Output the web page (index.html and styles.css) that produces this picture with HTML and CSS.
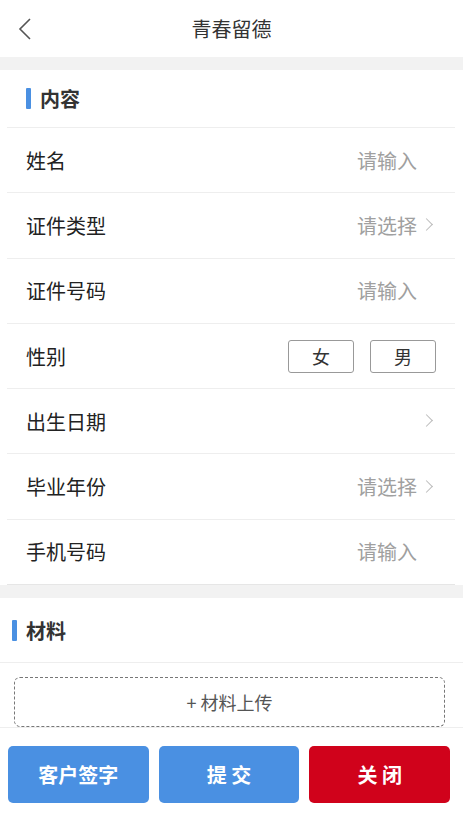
FILE: index.html
```html
<!DOCTYPE html>
<html>
<head>
    <meta charset="utf-8">
    <title>青春留德</title>
    <link rel="stylesheet" href="styles.css">
</head>
<body>
    <div class="header">
        <span class="back">
            <svg width="14" height="22" viewBox="0 0 14 22"><path d="M12 1 L2 11 L12 21" fill="none" stroke="#555" stroke-width="1.6"/></svg>
        </span>
        <h1>青春留德</h1>
    </div>

    <div class="section section-info">
        <div class="section-title">内容</div>
        <div class="row">
            <span class="label">姓名</span>
            <span class="value">请输入</span>
        </div>
        <div class="row">
            <span class="label">证件类型</span>
            <span class="value">请选择<i class="arrow"></i></span>
        </div>
        <div class="row">
            <span class="label">证件号码</span>
            <span class="value">请输入</span>
        </div>
        <div class="row">
            <span class="label">性别</span>
            <span class="gender">
                <span class="gender-btn">女</span>
                <span class="gender-btn">男</span>
            </span>
        </div>
        <div class="row">
            <span class="label">出生日期</span>
            <span class="value"><i class="arrow"></i></span>
        </div>
        <div class="row">
            <span class="label">毕业年份</span>
            <span class="value">请选择<i class="arrow"></i></span>
        </div>
        <div class="row">
            <span class="label">手机号码</span>
            <span class="value">请输入</span>
        </div>
    </div>

    <div class="section section-files">
        <div class="section-title">材料</div>
        <div class="upload-wrap">
            <div class="upload">+ 材料上传</div>
        </div>
    </div>

    <div class="footer">
        <button class="btn btn-blue">客户签字</button>
        <button class="btn btn-blue">提 交</button>
        <button class="btn btn-red">关 闭</button>
    </div>
</body>
</html>
```

FILE: styles.css
```css
body {
    margin: 0;
    background-color: #f2f2f2;
    font-family: "Noto Sans CJK SC", "Noto Sans", sans-serif;
    color: #222;
}
.header {
    position: relative;
    height: 57px;
    background-color: white;
    display: flex;
    align-items: center;
    justify-content: center;
}
.header h1 {
    margin: 0;
    font-size: 20px;
    font-weight: normal;
    color: #333;
}
.back {
    position: absolute;
    left: 18px;
    top: 18px;
    display: flex;
}
.section {
    background-color: white;
    margin-top: 13px;
}
.section-info {
    padding: 0 8px 0 7px;
}
.section-title {
    font-size: 20px;
    font-weight: bold;
    color: #333;
    display: flex;
    align-items: center;
    border-bottom: 1px solid #eee;
}
.section-title::before {
    content: "";
    width: 5px;
    height: 21px;
    background-color: #4a90e2;
    border-radius: 1px;
    margin-right: 9px;
}
.section-info .section-title {
    height: 57px;
    padding-left: 19px;
}
.section-files .section-title {
    height: 64px;
    padding-left: 12px;
}
.row {
    height: 64.3px;
    display: flex;
    align-items: center;
    justify-content: space-between;
    padding: 0 18px 0 19px;
    border-bottom: 1px solid #eee;
    font-size: 20px;
}
.row:last-child {
    border-bottom-color: #e6e6e6;
}
.label {
    color: #222;
}
.value {
    color: #a0a0a0;
    display: flex;
    align-items: center;
    margin-right: 20px;
    position: relative;
}
.arrow {
    position: absolute;
    right: -14px;
    top: 50%;
    width: 8px;
    height: 8px;
    margin-top: -5px;
    border-top: 1.3px solid #bbb;
    border-right: 1.3px solid #bbb;
    transform: rotate(45deg);
}
.gender {
    display: flex;
    gap: 16px;
    margin-right: 1px;
}
.gender-btn {
    width: 64px;
    height: 31px;
    border: 1px solid #999;
    border-radius: 3px;
    display: flex;
    align-items: center;
    justify-content: center;
    font-size: 18px;
    color: #333;
}
.upload-wrap {
    padding: 14px 18px 0 14px;
}
.upload {
    height: 48px;
    border: 1.5px dashed #777;
    border-radius: 6px;
    display: flex;
    align-items: center;
    justify-content: center;
    font-size: 18px;
    color: #555;
}
.footer {
    background-color: white;
    border-top: 1px solid #eee;
    display: grid;
    grid-template-columns: 1fr 1fr 1fr;
    gap: 10px;
    padding: 18px 13px 14px 8px;
}
.btn {
    height: 57px;
    border: none;
    border-radius: 5px;
    color: white;
    font-family: "Noto Sans CJK SC", sans-serif;
    font-size: 20px;
    font-weight: bold;
}
.btn-blue {
    background-color: #4a90e2;
}
.btn-red {
    background-color: #d0021b;
}
```
